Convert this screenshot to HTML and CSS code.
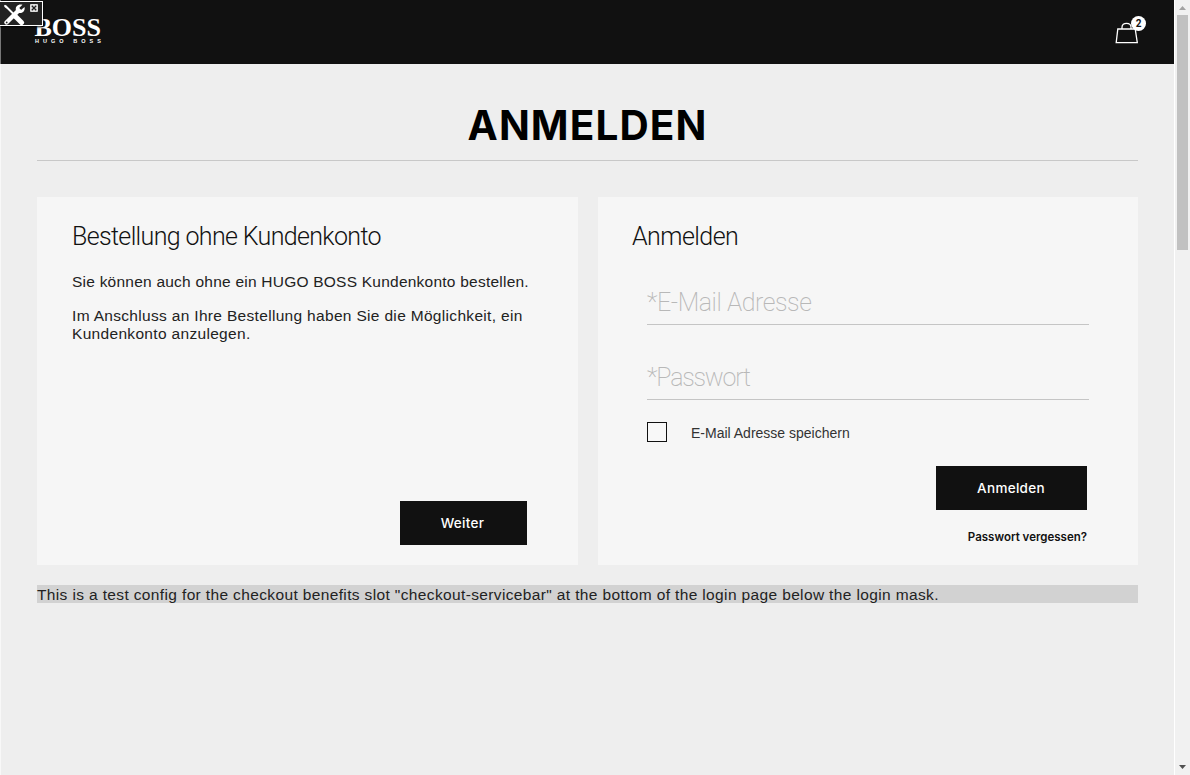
FILE: index.html
```html
<!DOCTYPE html>
<html lang="de">
<head>
<meta charset="utf-8">
<title>Anmelden | HUGO BOSS</title>
<link rel="stylesheet" href="styles.css">
</head>
<body>
<div class="window">
  <div class="page">
    <header class="header">
      <svg class="logo" width="70" height="30" viewBox="0 0 70 30" role="img" aria-label="BOSS HUGO BOSS">
        <text class="logo-main" x="0.500" y="20" textLength="66.500" lengthAdjust="spacingAndGlyphs">BOSS</text>
        <text class="logo-sub" x="1" y="27" textLength="66">HUGO BOSS</text>
      </svg>
      <div class="cart">
        <svg width="24" height="24" viewBox="0 0 24 24" fill="none" stroke="#fff" stroke-width="1.3">
          <path d="M2.8 9H20.2L22.3 22.6H1.2Z"/>
          <path d="M7 9V7.200C7 4.800 9 3.300 11.500 3.300S16 4.800 16 7.200V9"/>
        </svg>
        <span class="cart-count">2</span>
      </div>
    </header>
    <div class="toolbox">
      <svg width="42" height="25" viewBox="0 0 42 25">
        <path d="M5 3.500L15 13.500" stroke="#fff" stroke-width="2"/>
        <path d="M4 2.800L6.800 4.200L7.300 6.800L4.800 5.300Z" fill="#fff"/>
        <path d="M15.500 14.500L21.500 20.500" stroke="#fff" stroke-width="5" stroke-linecap="round"/>
        <path d="M6.500 20.500L18.500 8.500" stroke="#fff" stroke-width="4.400" stroke-linecap="round"/>
        <path d="M22.500 2.800L19.200 6L21 8L24.500 5C25.500 8.500 22.500 12 18.500 10.800L16 8.500C14.800 4.500 18.500 1.600 22.500 2.800Z" fill="#fff"/>
        <circle cx="6.700" cy="20.400" r=".9" fill="#222"/>
        <rect x="30" y="2" width="8" height="8" rx="1" fill="#ddd"/>
        <path d="M31.800 3.800L36.200 8.200M36.200 3.800L31.800 8.200" stroke="#222" stroke-width="1.300"/>
      </svg>
    </div>
    <main class="main">
      <h1 class="title">ANMELDEN</h1>
      <div class="cards">
        <section class="card guest">
          <h2 class="card-title guest-title">Bestellung ohne Kundenkonto</h2>
          <p class="copy first">Sie können auch ohne ein HUGO BOSS Kundenkonto bestellen.</p>
          <p class="copy second">Im Anschluss an Ihre Bestellung haben Sie die Möglichkeit, ein<br>Kundenkonto anzulegen.</p>
          <button class="button next">Weiter</button>
        </section>
        <section class="card login">
          <h2 class="card-title login-title">Anmelden</h2>
          <div class="field mail">*E-Mail Adresse</div>
          <div class="field password">*Passwort</div>
          <label class="remember"><span class="box"></span><span class="remember-text">E-Mail Adresse speichern</span></label>
          <button class="button submit">Anmelden</button>
          <a class="forgot">Passwort vergessen?</a>
        </section>
      </div>
      <div class="servicebar">This is a test config for the checkout benefits slot "checkout-servicebar" at the bottom of the login page below the login mask.</div>
    </main>
  </div>
  <div class="scrollbar">
    <svg class="arrow" width="15" height="15"><path d="M4 10L7.500 6L11 10Z" fill="#a3a3a3"/></svg>
    <div class="thumb"></div>
    <svg class="arrow down" width="15" height="15"><path d="M4 5L7.500 9L11 5Z" fill="#505050"/></svg>
  </div>
</div>
</body>
</html>
```
FILE: styles.css
```css
* { box-sizing: border-box; }
body { margin: 0; background: #eee; color: #111; font-family: Roboto, "Liberation Sans", sans-serif; overflow: hidden; }
h1, h2, p { margin: 0; }
.window { display: flex; width: 1190px; height: 775px; }
.page { position: relative; width: 1174px; border-left: 1px solid #f8f8f8; }
.header { display: flex; justify-content: space-between; height: 64px; margin-left: -1px; border-left: 1px solid #777; background: #111; padding: 16px 27px 0 33px; }
.logo { display: block; fill: #fff; }
.logo-main { font: bold 26px "Liberation Serif", serif; }
.logo-sub { font: bold 5.5px "Liberation Sans", sans-serif; }
.cart { position: relative; width: 32px; height: 32px; padding-top: 4px; }
.cart-count { position: absolute; left: 16px; top: 0; width: 15px; height: 15px; border-radius: 50%; background: #fff; font-size: 10px; font-weight: 700; line-height: 15px; text-align: center; }
.toolbox { position: absolute; left: -1px; top: 1px; width: 43px; height: 25px; border: 1px solid #fff; border-left: 0; background: #222; box-shadow: 0 1px 2px #000; overflow: hidden; }
.toolbox svg { display: block; }
.main { padding: 33px 36px 0; }
.title { height: 64px; border-bottom: 1px solid #c8c8c8; color: #000; font: 700 40.5px/57px Inter, sans-serif; letter-spacing: 1.1px; text-align: center; }
.cards { display: flex; gap: 20px; margin-top: 36px; }
.card { display: flex; flex-direction: column; height: 368px; background: #f6f6f6; white-space: nowrap; }
.guest { width: 541px; padding: 24px 51px 20px 35px; }
.login { width: 540px; padding: 24px 49px 20px 49px; }
.card-title { font-size: 25px; font-weight: 300; line-height: 32px; letter-spacing: -.65px; }
.login-title { margin-left: -15px; letter-spacing: -.55px; }
.copy { color: #222; font-family: "Liberation Sans", sans-serif; font-size: 15.5px; line-height: 18px; letter-spacing: .23px; }
.first { margin-top: 20px; }
.second { margin-top: 16px; letter-spacing: .32px; }
.button { align-self: flex-end; height: 44px; padding: 0; border: 0; background: #111; color: #fff; font: 500 13.5px/44px Inter, sans-serif; letter-spacing: .3px; }
.next { width: 127px; margin-top: auto; padding-right: 2px; }
.field { height: 48px; border-bottom: 1px solid #c5c5c5; color: #b8b8b8; font-size: 25px; font-weight: 200; line-height: 52px; letter-spacing: -.45px; }
.mail { margin-top: 24px; }
.password { margin-top: 27px; letter-spacing: -1.2px; }
.remember { display: flex; align-items: center; gap: 24px; height: 20px; margin-top: 22px; color: #333; font: 14px "Liberation Sans", sans-serif; }
.remember-text { padding-top: 2px; }
.box { width: 20px; height: 20px; border: 1px solid #111; background: #f8f8f8; }
.submit { width: 151px; margin: 24px 2px 0 0; padding-right: 1px; }
.forgot { align-self: flex-end; margin: 19px 2px 0 0; font: 600 11.5px/16px Inter, sans-serif; }
.servicebar { height: 18px; margin-top: 20px; background: #d2d2d2; color: #222; font-family: "Liberation Sans", sans-serif; font-size: 15.5px; line-height: 19px; letter-spacing: .363px; white-space: nowrap; }
.scrollbar { display: flex; flex-direction: column; width: 16px; border-left: 1px solid #fff; background: #f1f1f1; }
.arrow { display: block; }
.thumb { width: 11px; height: 235px; margin-left: 2px; background: #c1c1c1; }
.down { margin-top: auto; }
```
